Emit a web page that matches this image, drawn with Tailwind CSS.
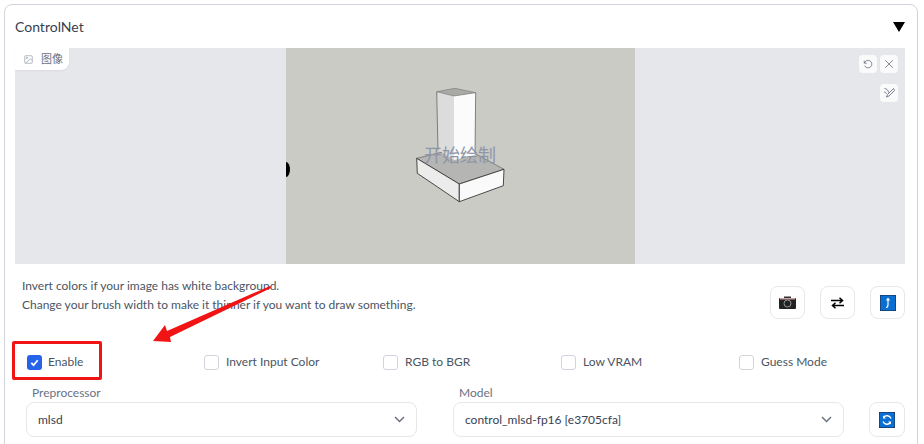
<!doctype html>
<html><head><meta charset="utf-8"><script src="https://cdn.jsdelivr.net/npm/@tailwindcss/browser@4"></script></head>
<body class="bg-white overflow-hidden">
<div class="relative w-[924px] h-[444px] overflow-hidden pt-[4px] pl-[4px] font-['Lato','Noto_Sans_CJK_SC',sans-serif] text-[#4b5563]">
  <div class="w-[914px] h-[460px] border border-[#d1d5db] rounded-lg bg-white pt-[9px] px-[10px]">
    <div class="flex justify-between items-center w-[890px] h-[24px] text-[14px] text-[#374151]">
      <span>ControlNet</span>
      <span class="w-0 h-0 mt-[1px] border-l-[6px] border-r-[6px] border-t-[10px] border-l-transparent border-r-transparent border-t-black"></span>
    </div>
    <div class="relative mt-[10px] w-[890px] h-[216px] bg-[#e5e7eb] flex justify-center">
      <div class="relative w-[349px] h-full bg-[#cbcbc5]">
        <svg class="absolute left-0 top-0" width="349" height="216" viewBox="286 48 349 216" stroke-linejoin="round">
          <ellipse cx="286" cy="169.500" rx="4" ry="7.500" fill="#000"/>
          <polygon points="416.700,158.300 463,147 504,169.300 459.300,184" fill="#b5b5b3" stroke="#555" stroke-width=".6"/>
          <polygon points="416.700,158.300 459.300,184 459.300,201.700 417.300,173.300" fill="#ececec" stroke="#222" stroke-width=".8"/>
          <polygon points="459.300,184 504,169.300 503.300,185.700 459.300,201.700" fill="#fafafa" stroke="#222" stroke-width=".8"/>
          <polygon points="454,96 475.700,92.700 475,155 454,160" fill="#fbfbfb"/>
          <polygon points="436.700,91.700 454,96 454,160 438,150" fill="#dcdcdc"/>
          <polygon points="436.700,91.700 455,88.300 475.700,92.700 454,96" fill="#a9a9a6" stroke="#666" stroke-width=".5"/>
          <path d="M436.700 91.700 438 150M475.700 92.700 475 153" stroke="#555" stroke-width=".7" fill="none"/>
        </svg>
      </div>
      <div class="absolute left-0 right-0 top-[95px] text-center text-[18px] leading-[24px] text-[#8f96a8]">开始绘制</div>
      <div class="absolute left-0 top-0 h-[22px] w-[54px] bg-white rounded-br-lg flex items-center pl-[9px] gap-[8px] text-[11px] text-[#6b7280] shadow-xs">
        <svg class="w-[9px] h-[9px]" viewBox="0 0 24 24" fill="none" stroke="#9ca3af" stroke-width="2"><rect x="2" y="2" width="20" height="20" rx="2"/><circle cx="8" cy="8" r="2"/><path d="M22 15l-5-5L4 22"/></svg>
        <span>图像</span>
      </div>
      <div class="absolute right-[7px] top-[7px] flex flex-col items-end gap-[11px]">
        <div class="flex gap-[3px]">
          <div class="w-[18px] h-[18px] bg-white/80 rounded-[4px] flex items-center justify-center"><svg class="w-[10px] h-[10px]" viewBox="0 0 24 24" fill="none" stroke="#6b7280" stroke-width="2"><path d="M3 4v6h6"/><path d="M3.500 10a9 9 0 1 1 .5 6"/></svg></div>
          <div class="w-[18px] h-[18px] bg-white/80 rounded-[4px] flex items-center justify-center"><svg class="w-[10px] h-[10px]" viewBox="0 0 24 24" fill="none" stroke="#6b7280" stroke-width="2"><path d="M3 3l18 18M21 3 3 21"/></svg></div>
        </div>
        <div class="w-[18px] h-[18px] bg-white/80 rounded-[4px] flex items-center justify-center"><svg class="w-[12px] h-[12px]" viewBox="0 0 24 24" fill="none" stroke="#6b7280" stroke-width="1.800"><path d="M21 3 9 15l-2 5 5-2L23 7z"/><path d="M3 3c6 1 8 5 8 8M2 10c3 0 5 2 5 4"/></svg></div>
      </div>
    </div>
    <div class="flex justify-between mt-[12px] h-[68px] w-[890px] pl-[7px]">
      <div class="text-[12px] leading-[18.500px] text-[#4b5563] pt-[1px]">
        <p>Invert colors if your image has white background.</p>
        <p>Change your brush width to make it thinner if you want to draw something.</p>
      </div>
      <div class="flex gap-[15px] mt-[10px] h-[33px]">
        <div class="w-[35px] h-[33px] border border-[#e5e7eb] rounded-lg flex items-center justify-center">
          <svg width="17" height="13" viewBox="0 0 17 13"><rect x="0" y="2" width="17" height="11" rx="1" fill="#222"/><rect x="5" y="0.500" width="7" height="2" fill="#333"/><rect x="1" y="2" width="15" height="1.500" fill="#c9a5a5"/><circle cx="8.500" cy="7.500" r="3.500" fill="#222" stroke="#999" stroke-width="1"/></svg>
        </div>
        <div class="w-[35px] h-[33px] border border-[#e5e7eb] rounded-lg flex items-center justify-center">
          <svg width="13" height="12" viewBox="0 0 13 12" fill="none" stroke="#000" stroke-width="1.500"><path d="M0 3.500h11.500M8.500 .8l3 2.700-3 2.700M13 8.500H1.500M4.500 5.800l-3 2.700 3 2.700"/></svg>
        </div>
        <div class="w-[35px] h-[33px] border border-[#e5e7eb] rounded-lg flex items-center justify-center">
          <svg width="16" height="16" viewBox="0 0 16 16"><rect width="16" height="16" fill="#0a6fd1" stroke="#223" stroke-width="1"/><path d="M6 12.500c2 0 2-1 2-3V4M6.500 5.500 8 3.500l1.500 2" fill="none" stroke="#fff" stroke-width="1.200"/></svg>
        </div>
      </div>
    </div>
    <div class="flex mt-[6px] h-[24px] items-center pl-[12px] text-[12px] text-[#4b5563]">
      <label class="w-[177px] flex items-center gap-[6px]"><span class="w-[15px] h-[15px] rounded-[3px] bg-[#2563eb] flex items-center justify-center"><svg width="11" height="11" viewBox="0 0 12 12" fill="none" stroke="#fff" stroke-width="2"><path d="M2.500 6.500 5 9l4.500-5.500"/></svg></span>Enable</label>
      <label class="w-[179px] flex items-center gap-[7px]"><span class="w-[15px] h-[15px] rounded-[3px] border border-[#d1d5db] bg-white"></span>Invert Input Color</label>
      <label class="w-[178px] flex items-center gap-[7px]"><span class="w-[15px] h-[15px] rounded-[3px] border border-[#d1d5db] bg-white"></span>RGB to BGR</label>
      <label class="w-[178px] flex items-center gap-[7px]"><span class="w-[15px] h-[15px] rounded-[3px] border border-[#d1d5db] bg-white"></span>Low VRAM</label>
      <label class="flex items-center gap-[7px]"><span class="w-[15px] h-[15px] rounded-[3px] border border-[#d1d5db] bg-white"></span>Guess Mode</label>
    </div>
    <div class="flex mt-[11px] pl-[11px] text-[12px]">
      <div class="w-[391px]">
        <div class="pl-[6px] h-[17px] leading-[16px] text-[#6b7280]">Preprocessor</div>
        <div class="h-[35px] border border-[#e5e7eb] rounded-lg flex items-center justify-between pl-[11px] pr-[11px] text-[#374151]">mlsd<svg width="11" height="7" viewBox="0 0 11 7" fill="none" stroke="#6b7280" stroke-width="1.500"><path d="M1 1l4.500 4.500L10 1"/></svg></div>
      </div>
      <div class="w-[391px] ml-[36px]">
        <div class="pl-[6px] h-[17px] leading-[16px] text-[#6b7280]">Model</div>
        <div class="h-[35px] border border-[#e5e7eb] rounded-lg flex items-center justify-between pl-[11px] pr-[11px] text-[#374151]">control_mlsd-fp16 [e3705cfa]<svg width="11" height="7" viewBox="0 0 11 7" fill="none" stroke="#6b7280" stroke-width="1.500"><path d="M1 1l4.500 4.500L10 1"/></svg></div>
      </div>
      <div class="w-[36px] h-[35px] mt-[17px] ml-[25px] border border-[#e5e7eb] rounded-lg flex items-center justify-center">
        <svg width="16" height="16" viewBox="0 0 16 16"><rect width="16" height="16" fill="#0a6fd1" stroke="#223" stroke-width="1"/><path d="M12 6.500A4.300 4.300 0 0 0 4.500 5.500M4 9.500a4.300 4.300 0 0 0 7.500 1" fill="none" stroke="#fff" stroke-width="1.400"/><path d="M4 3.500v3h3M12 12.500v-3H9" fill="#fff"/></svg>
      </div>
    </div>
  </div>
  <div class="absolute left-[12px] top-[341px] w-[90px] h-[39px] border-[3px] border-[#f01414] rounded-[2px]"></div>
  <svg class="absolute left-0 top-0 pointer-events-none" width="924" height="444"><polygon points="270,286 167,331 165,325 153,341 171,342 170,337 271,288" fill="#f01414"/></svg>
</div>
</body></html>
